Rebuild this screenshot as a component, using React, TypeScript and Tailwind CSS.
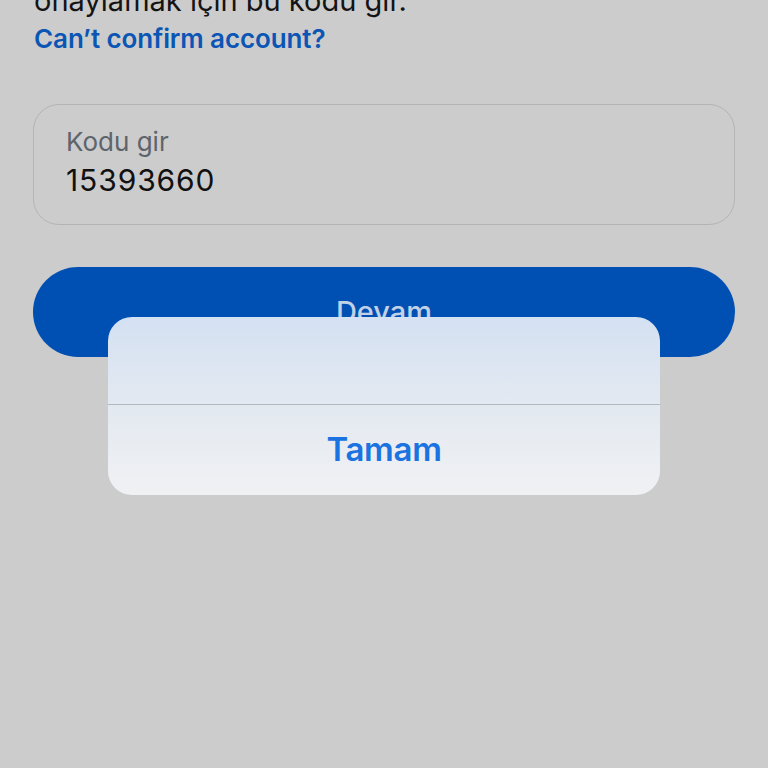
export default function App() {
  return (
    <div
      className="relative w-[768px] h-[768px] overflow-hidden bg-[#cccccc]"
      style={{ fontFamily: 'Inter, "Noto Sans", sans-serif' }}
    >
      <div className="flex flex-col px-[33px] -mt-[17px]">
        <div className="text-[29px] leading-[36px] text-[#141414] pl-[1px]">onaylamak için bu kodu gir.</div>
        <div className="mt-[2px] text-[26px] leading-[36px] font-semibold text-[#0b55b5] pl-[1px] tracking-[-0.1px]">Can’t confirm account?</div>
        <div className="mt-[47px] h-[121px] rounded-[26px] border-[1.5px] border-[#b4b4b4] flex flex-col pt-[21px] px-[32px]">
          <div className="text-[26px] leading-[32px] text-[#5d646c] tracking-[0px]">Kodu gir</div>
          <div className="mt-[2px] text-[30px] leading-[40px] text-[#111111] tracking-[0.9px]">15393660</div>
        </div>
        <div className="mt-[42px] h-[90px] rounded-full bg-[#0050b3] flex items-center justify-center">
          <span className="text-[29px] font-medium text-[#c3d1e6] -mt-[1px]">Devam</span>
        </div>
      </div>

      <div className="absolute left-[108px] top-[317px] w-[552px] h-[178px] rounded-[24px] overflow-hidden flex flex-col bg-gradient-to-b from-[#d4e1f2] via-[#e3e9f1] to-[#f0f1f3]">
        <div className="h-[87px]" />
        <div className="h-[1px] bg-[#b3b7bc]" />
        <div className="flex-1 flex items-center justify-center">
          <span className="text-[33px] font-semibold text-[#1a73e0] tracking-[-0.3px]">Tamam</span>
        </div>
      </div>
    </div>
  );
}
